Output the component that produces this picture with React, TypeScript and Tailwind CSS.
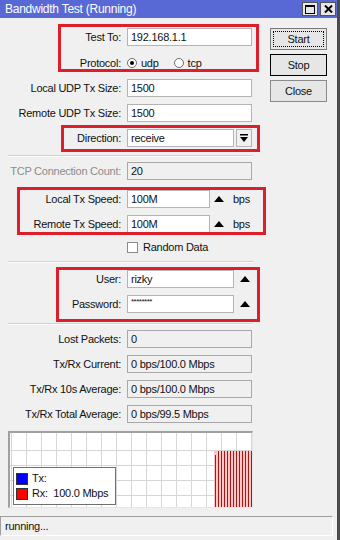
import type { ReactNode } from 'react';

const font = "font-['Liberation_Sans',Arial,sans-serif] text-[11px] tracking-[-0.25px] text-[#111]";

function Label({ children, muted = false }: { children: ReactNode; muted?: boolean }) {
  return (
    <div className={`w-[121px] shrink-0 text-right ${muted ? 'text-[#8c8c8c]' : ''}`}>
      {children}
    </div>
  );
}

function Field({
  value,
  width = 'w-[125px]',
  readOnly = false,
}: {
  value: string;
  width?: string;
  readOnly?: boolean;
}) {
  return (
    <div
      className={`${width} h-[18px] flex items-center pl-[3px] border ${
        readOnly ? 'bg-[#f0f0f0] border-[#a8a8a8]' : 'bg-white border-[#b4b4b4]'
      }`}
    >
      {value}
    </div>
  );
}

function Row({
  label,
  children,
  className = '',
  muted = false,
}: {
  label: string;
  children: ReactNode;
  className?: string;
  muted?: boolean;
}) {
  return (
    <div className={`flex items-center h-[18px] ${className}`}>
      <Label muted={muted}>{label}</Label>
      <div className="ml-[6px] flex items-center">{children}</div>
    </div>
  );
}

function UpArrow() {
  return (
    <svg width="10" height="6" viewBox="0 0 10 6" className="block">
      <polygon points="5,0 10,6 0,6" fill="#000" />
    </svg>
  );
}

function Separator({ className = '' }: { className?: string }) {
  return <div className={`ml-[8px] w-[245px] border-t border-[#d2d2d2] border-b border-b-white ${className}`} />;
}

function Radio({ checked }: { checked: boolean }) {
  return (
    <div className="w-[10px] h-[10px] rounded-full border border-[#6d6d6d] bg-white flex items-center justify-center">
      {checked && <div className="w-[4px] h-[4px] rounded-full bg-black" />}
    </div>
  );
}

function Graph() {
  const vLines = Array.from({ length: 17 }, (_, i) => 1 + i * 15);
  const hLines = [17, 32, 47, 62];
  const bars = Array.from({ length: 12 }, (_, i) => 210 + i * 3);

  return (
    <div className="relative ml-[8px] w-[245px] h-[77px] bg-white border-t-2 border-l-2 border-[#a0a0a0] border-r border-b border-r-[#e6e6e6] border-b-[#e6e6e6]">
      <svg width="242" height="74" viewBox="0 0 242 74" className="block">
        {vLines.map((x) => (
          <line key={x} x1={x + 0.5} y1="0" x2={x + 0.5} y2="74" stroke="#d6d6d6" />
        ))}
        {hLines.map((y) => (
          <line key={y} x1="0" y1={y + 0.5} x2="242" y2={y + 0.5} stroke="#d6d6d6" />
        ))}
        <rect x="204" y="18" width="38" height="56" fill="#ffc6c6" />
        <line x1="205.5" y1="22" x2="205.5" y2="74" stroke="#9e1a1a" />
        {bars.map((x) => (
          <line key={x} x1={x - 1.5} y1="18" x2={x - 1.5} y2="74" stroke="#9e1a1a" />
        ))}
      </svg>

      <div className="absolute left-[3px] top-[34px] w-[103px] h-[38px] bg-white border border-[#707070] px-[2px] pt-[4px]">
        <div className="flex items-center h-[13px]">
          <div className="w-[12px] h-[12px] bg-[#0000ff] border border-[#333]" />
          <span className="ml-[4px]">Tx:</span>
        </div>
        <div className="flex items-center h-[13px] mt-[2px]">
          <div className="w-[12px] h-[12px] bg-[#ff0000] border border-[#333]" />
          <span className="ml-[4px]">Rx:&nbsp;&nbsp;100.0 Mbps</span>
        </div>
      </div>
    </div>
  );
}

export default function App() {
  return (
    <div className={`relative w-[340px] h-[540px] bg-[#f0f0f0] border-r-[3px] border-[#4a4a4a] overflow-hidden ${font}`}>
      {/* title bar */}
      <div className="h-[18px] bg-[#5869d6] flex items-center pl-[5px] pr-[1px]">
        <span className="text-white text-[12px]">Bandwidth Test (Running)</span>
        <div className="ml-auto flex items-center gap-[2px]">
          <div className="w-[16px] h-[14px] bg-[#e8e8e8] border border-[#555] flex items-center justify-center">
            <div className="w-[10px] h-[9px] border border-black border-t-2" />
          </div>
          <div className="w-[16px] h-[14px] bg-[#e8e8e8] border border-[#555] flex items-center justify-center">
            <svg width="9" height="8" viewBox="0 0 9 8">
              <path d="M1 0.5 L8 7.5 M8 0.5 L1 7.5" stroke="#000" strokeWidth="2" />
            </svg>
          </div>
        </div>
      </div>

      <div className="flex">
        {/* form column */}
        <div className="w-[260px] pt-[10px]">
          <Row label="Test To:">
            <Field value="192.168.1.1" />
          </Row>
          <Row label="Protocol:" className="mt-[8px]">
            <div className="flex items-center">
              <Radio checked />
              <span className="ml-[4px]">udp</span>
              <div className="ml-[15px]">
                <Radio checked={false} />
              </div>
              <span className="ml-[4px]">tcp</span>
            </div>
          </Row>
          <Row label="Local UDP Tx Size:" className="mt-[7px]">
            <Field value="1500" />
          </Row>
          <Row label="Remote UDP Tx Size:" className="mt-[7px]">
            <Field value="1500" />
          </Row>
          <Row label="Direction:" className="mt-[7px]">
            <Field value="receive" width="w-[107px]" />
            <div className="ml-[2px] w-[16px] h-[18px] bg-[#f0f0f0] border border-[#b4b4b4] flex items-center justify-center">
              <svg width="8" height="8" viewBox="0 0 8 8">
                <rect x="0" y="0" width="8" height="1.5" fill="#000" />
                <polygon points="0,3 8,3 4,8" fill="#000" />
              </svg>
            </div>
          </Row>

          <Separator className="mt-[8px]" />

          <Row label="TCP Connection Count:" className="mt-[5px]" muted>
            <Field value="20" readOnly />
          </Row>
          <Row label="Local Tx Speed:" className="mt-[10px]">
            <Field value="100M" width="w-[83px]" />
            <div className="ml-[4px]">
              <UpArrow />
            </div>
            <span className="ml-[9px]">bps</span>
          </Row>
          <Row label="Remote Tx Speed:" className="mt-[7px]">
            <Field value="100M" width="w-[83px]" />
            <div className="ml-[4px]">
              <UpArrow />
            </div>
            <span className="ml-[9px]">bps</span>
          </Row>
          <div className="mt-[8px] ml-[127px] flex items-center h-[12px]">
            <div className="w-[11px] h-[11px] bg-white border border-[#8a8a8a]" />
            <span className="ml-[5px]">Random Data</span>
          </div>

          <Separator className="mt-[8px]" />

          <Row label="User:" className="mt-[7px]">
            <Field value="rizky" width="w-[107px]" />
            <div className="ml-[6px]">
              <UpArrow />
            </div>
          </Row>
          <Row label="Password:" className="mt-[7px]">
            <div className="w-[107px] h-[18px] pl-[3px] bg-white border border-[#b4b4b4] text-[8px] leading-[12px] tracking-[-0.5px]">
              ********
            </div>
            <div className="ml-[6px]">
              <UpArrow />
            </div>
          </Row>

          <Separator className="mt-[10px]" />

          <Row label="Lost Packets:" className="mt-[5px]">
            <Field value="0" readOnly />
          </Row>
          <Row label="Tx/Rx Current:" className="mt-[7px]">
            <Field value="0 bps/100.0 Mbps" readOnly />
          </Row>
          <Row label="Tx/Rx 10s Average:" className="mt-[7px]">
            <Field value="0 bps/100.0 Mbps" readOnly />
          </Row>
          <Row label="Tx/Rx Total Average:" className="mt-[7px]">
            <Field value="0 bps/99.5 Mbps" readOnly />
          </Row>

          <div className="mt-[8px]">
            <Graph />
          </div>
        </div>

        {/* buttons */}
        <div className="pl-[10px] pt-[10px] flex flex-col gap-[4px]">
          <button className="w-[57px] h-[22px] bg-[#e6e6e6] border border-[#7a7a7a] p-[2px]">
            <span className="flex h-full items-center justify-center border border-dotted border-black">Start</span>
          </button>
          <button className="w-[57px] h-[22px] bg-[#e6e6e6] border border-black">Stop</button>
          <button className="w-[57px] h-[22px] bg-[#e6e6e6] border border-[#8a8a8a]">Close</button>
        </div>
      </div>

      {/* status bar */}
      <div className="mt-[8px] w-[333px] h-[20px] flex items-center pl-[4px] border-t border-l border-[#a0a0a0] border-r border-b border-r-white border-b-white">
        running...
      </div>

      {/* red annotation frames */}
      <div className="absolute left-[58px] top-[24px] w-[201px] h-[48px] border-[3px] border-[#dc1f2b]" />
      <div className="absolute left-[61px] top-[125px] w-[199px] h-[27px] border-[3px] border-[#dc1f2b]" />
      <div className="absolute left-[17px] top-[187px] w-[249px] h-[48px] border-[3px] border-[#dc1f2b]" />
      <div className="absolute left-[56px] top-[267px] w-[204px] h-[55px] border-[3px] border-[#dc1f2b]" />
    </div>
  );
}
